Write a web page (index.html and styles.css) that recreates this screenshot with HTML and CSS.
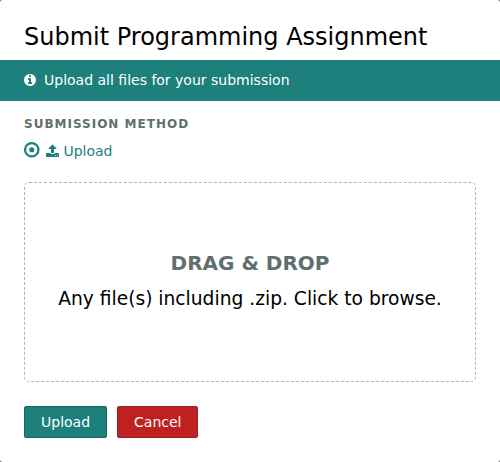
FILE: index.html
```html
<!DOCTYPE html>
<html lang="en">
<head>
<meta charset="utf-8">
<title>Submit Programming Assignment</title>
<link rel="stylesheet" href="styles.css">
</head>
<body>
<main class="dialog">
  <h1 class="title">Submit Programming Assignment</h1>
  <div class="notice">
    <svg class="info-icon" viewBox="0 128 1536 1536" aria-hidden="true"><path fill="currentColor" d="M1024 1376v-160q0-14-9-23t-23-9h-96v-512q0-14-9-23t-23-9h-320q-14 0-23 9t-9 23v160q0 14 9 23t23 9h96v320h-96q-14 0-23 9t-9 23v160q0 14 9 23t23 9h448q14 0 23-9t9-23zm-128-896v-160q0-14-9-23t-23-9h-192q-14 0-23 9t-9 23v160q0 14 9 23t23 9h192q14 0 23-9t9-23zm640 416q0 209-103 385.5t-279.5 279.5-385.5 103-385.5-103-279.5-279.5-103-385.5 103-385.5 279.5-279.5 385.5-103 385.5 103 279.5 279.5 103 385.5z"/></svg>
    <span>Upload all files for your submission</span>
  </div>
  <form class="content">
    <div class="label">Submission Method</div>
    <div class="method">
      <svg class="radio" viewBox="0 0 16 16" aria-hidden="true"><circle cx="7.75" cy="7.75" r="6.7" fill="none" stroke="currentColor" stroke-width="2.2"/><circle cx="7.75" cy="7.75" r="2.6" fill="currentColor"/></svg>
      <svg class="upload-icon" viewBox="0 0 1664 1792" aria-hidden="true"><path fill="currentColor" d="M1280 1472q0-26-19-45t-45-19-45 19-19 45 19 45 45 19 45-19 19-45zm256 0q0-26-19-45t-45-19-45 19-19 45 19 45 45 19 45-19 19-45zm128-224v320q0 40-28 68t-68 28h-1472q-40 0-68-28t-28-68v-320q0-40 28-68t68-28h427q21 56 70.5 92t110.5 36h256q61 0 110.5-36t70.5-92h427q40 0 68 28t28 68zm-325-648q-17 40-59 40h-256v448q0 26-19 45t-45 19h-256q-26 0-45-19t-19-45v-448h-256q-42 0-59-40-17-39 14-69l448-448q18-19 45-19t45 19l448 448q31 30 14 69z"/></svg>
      <span>Upload</span>
    </div>
    <div class="dropzone">
      <div class="drop-title">Drag &amp; Drop</div>
      <div class="drop-text">Any file(s) including .zip. Click to browse.</div>
    </div>
    <div class="actions">
      <button class="button primary" type="button">Upload</button>
      <button class="button danger" type="button">Cancel</button>
    </div>
  </form>
</main>
</body>
</html>
```
FILE: styles.css
```css
* { box-sizing: border-box; }
body {
  margin: 0;
  background: #808080;
  font: 14px/20px "DejaVu Sans", sans-serif;
  color: #000;
}
.dialog {
  height: 462px;
  background: #fff;
  border-radius: 3px;
  overflow: hidden;
}
.title {
  margin: 0;
  height: 60px;
  padding: 21px 24px 0;
  font-size: 24px;
  line-height: 32px;
  font-weight: 400;
  white-space: nowrap;
}
.notice {
  display: flex;
  align-items: center;
  gap: 8px;
  height: 41px;
  padding: 0 24px 1px;
  background: #1d807c;
  color: #fff;
}
.info-icon { width: 12px; height: 12px; }
.content { padding: 15px 24px 0; }
.label {
  height: 17px;
  line-height: 17px;
  font-size: 12px;
  font-weight: 700;
  letter-spacing: 1px;
  text-transform: uppercase;
  color: #5f6f6e;
}
.method {
  display: flex;
  align-items: center;
  height: 20px;
  margin: 8px 0 21px;
  color: #1d807c;
}
.radio { width: 16px; height: 16px; margin: -2px 6px 0 0; }
.upload-icon { width: 13px; height: 14px; margin-right: 4.45px; }
.dropzone {
  height: 200px;
  padding-top: 66px;
  border: 1px dashed #b0b5b5;
  border-radius: 5px;
  text-align: center;
}
.drop-title {
  font-size: 20px;
  line-height: 28px;
  font-weight: 700;
  text-transform: uppercase;
  color: #5f6f6e;
}
.drop-text {
  margin-top: 8px;
  font-size: 18.67px;
  line-height: 28px;
  white-space: nowrap;
}
.actions { display: flex; gap: 10px; margin-top: 24px; }
.button {
  height: 32px;
  padding: 0 16px;
  border: 1px solid;
  border-radius: 2px;
  font: inherit;
  color: #fff;
}
.primary { background: #1d807c; border-color: #17625e; }
.danger { width: 81px; background: #bf2020; border-color: #93202a; }
```
